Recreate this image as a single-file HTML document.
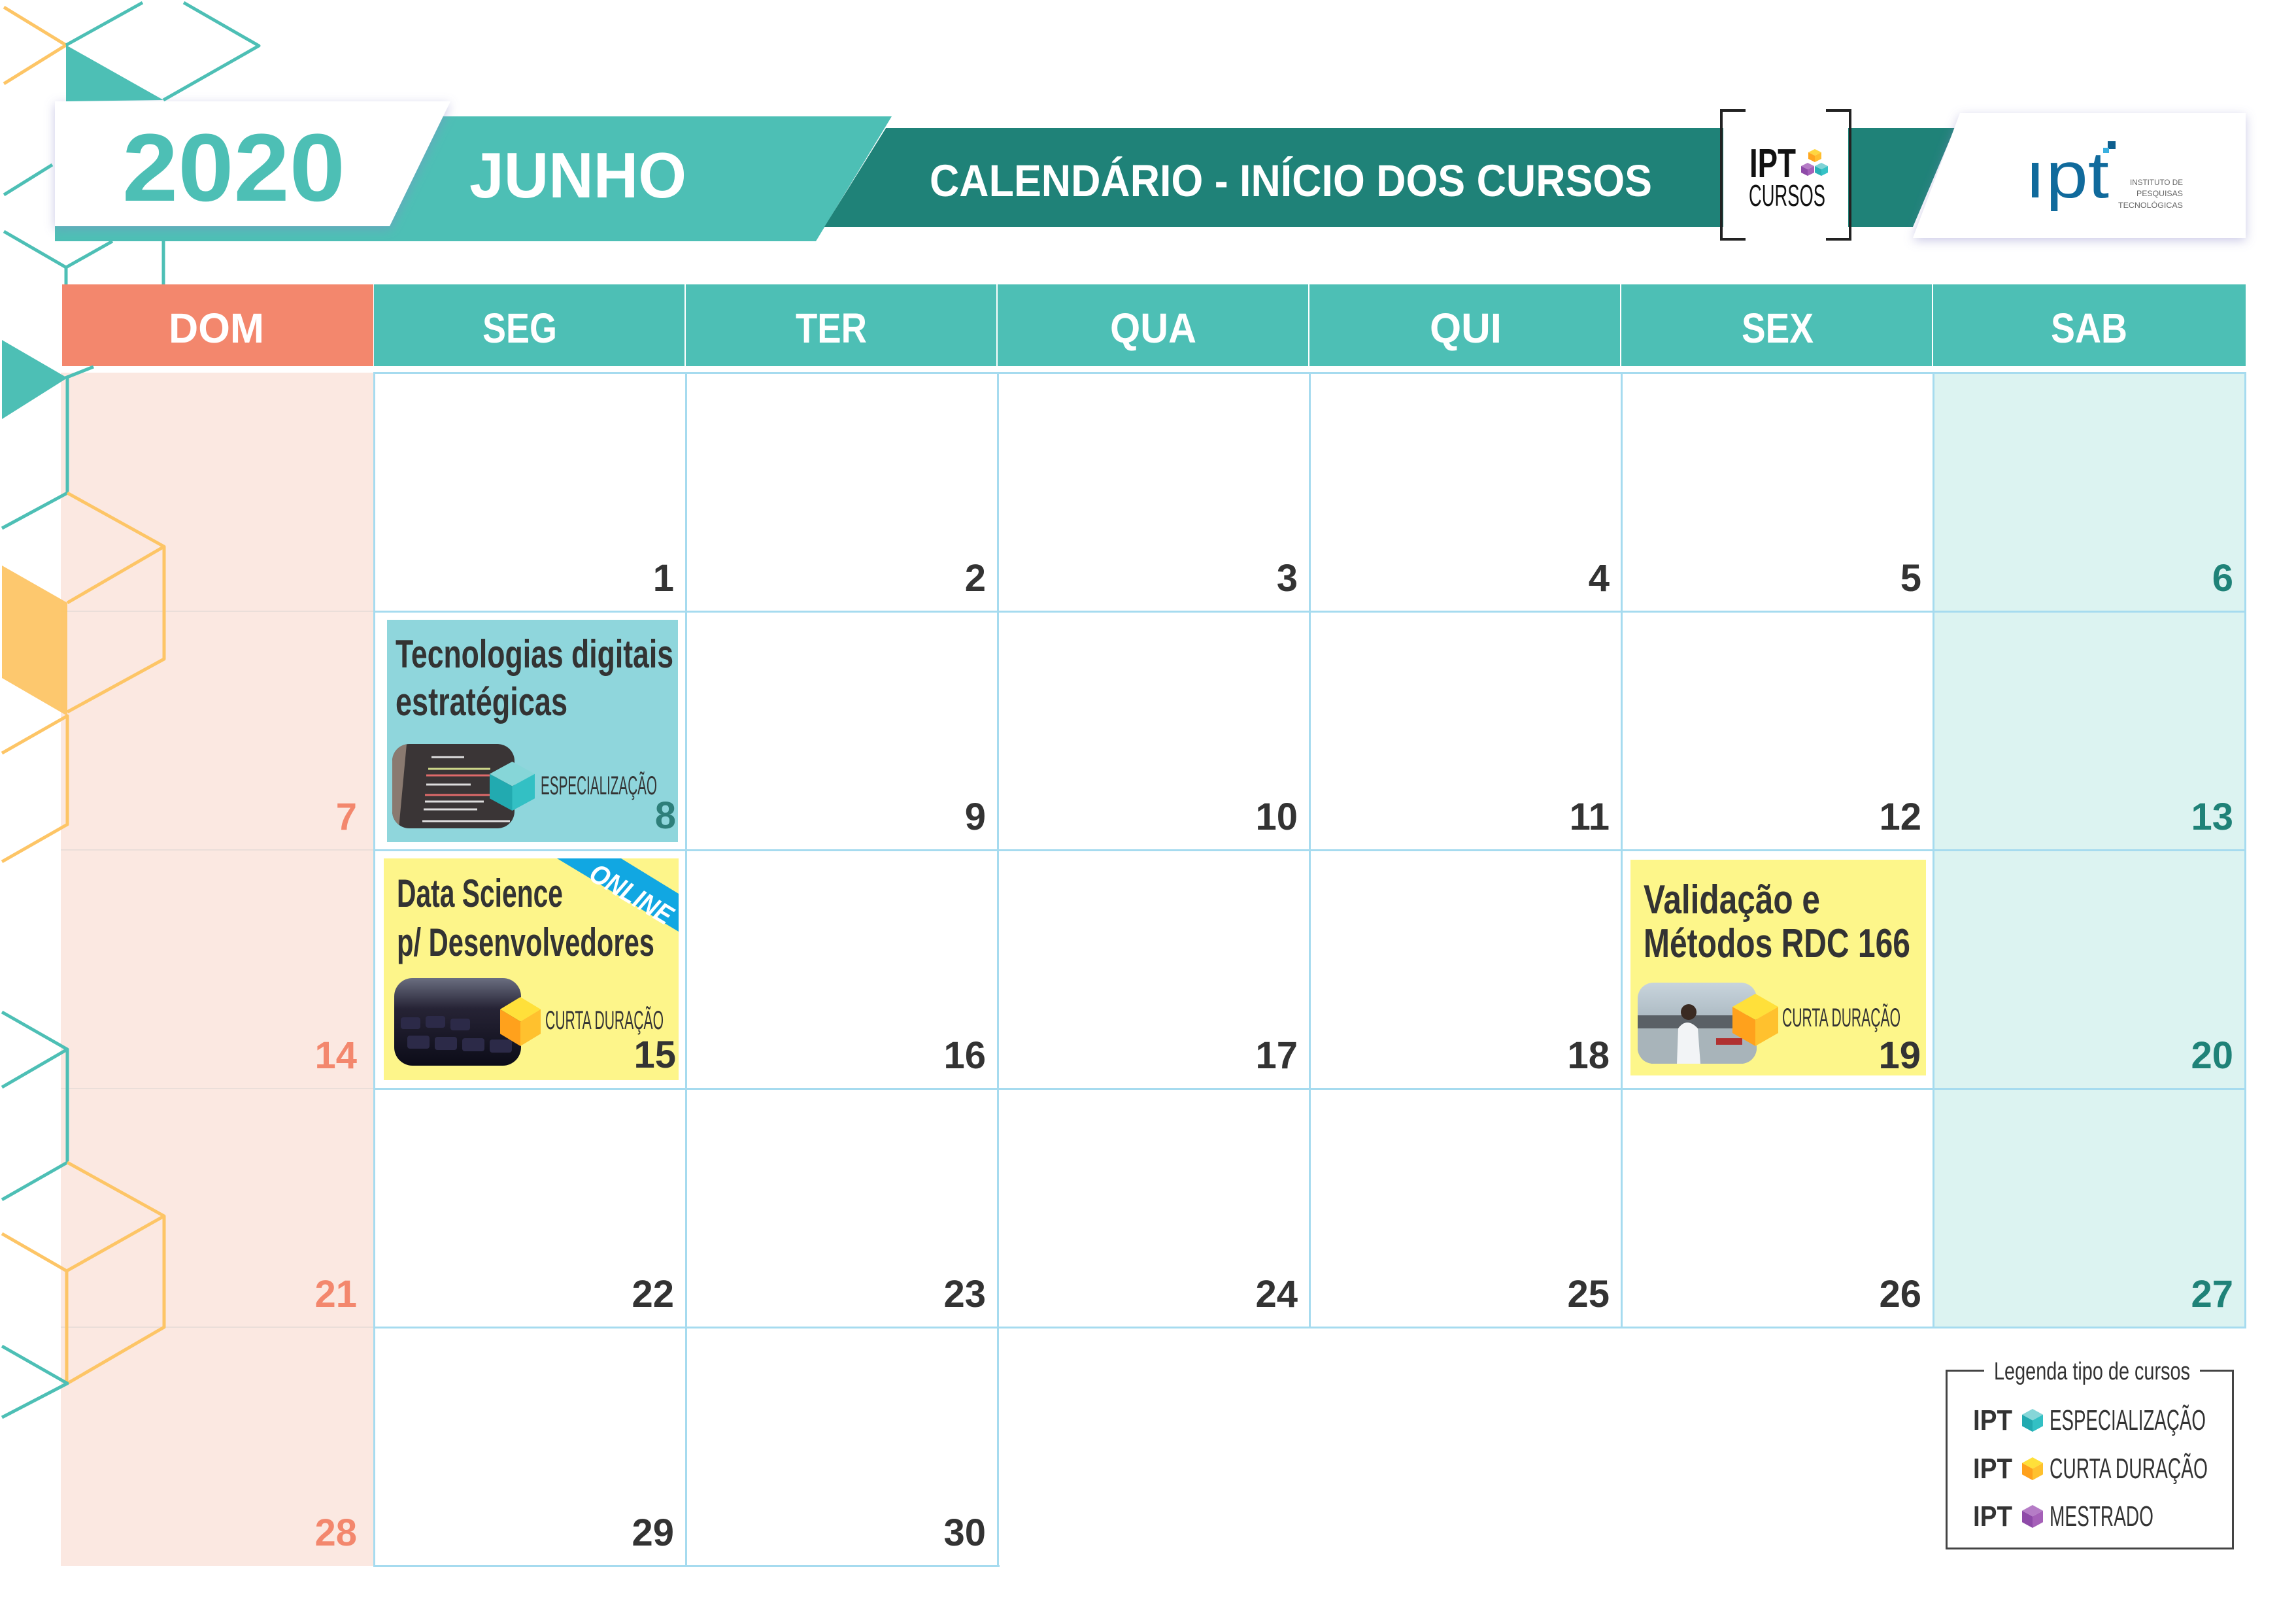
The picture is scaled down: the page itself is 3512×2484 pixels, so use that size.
<!DOCTYPE html>
<html><head><meta charset="utf-8">
<style>
*{margin:0;padding:0;box-sizing:border-box}
body{width:3512px;height:2484px;background:#fff;position:relative;overflow:hidden;font-family:"Liberation Sans",sans-serif}
.a{position:absolute}
.t{position:absolute;white-space:nowrap;line-height:1}
.t>span{display:inline-block;transform-origin:0 0}
.b{font-weight:bold}
.n{position:absolute;width:150px;text-align:right;font-weight:bold;font-size:58px;line-height:1;color:#333}
.sun{color:#f3876d}.sat{color:#1f8278}
.hl{position:absolute;height:3px;background:#a6dbef}
.vl{position:absolute;width:3px;background:#a6dbef}
.dh{position:absolute;top:435px;height:125px;background:#4dbfb5}
</style></head><body>

<svg class="a" style="left:0;top:0" width="3512" height="420">
<defs><filter id="sh" x="-10%" y="-20%" width="120%" height="140%"><feDropShadow dx="0" dy="4" stdDeviation="8" flood-color="#8a88c8" flood-opacity="0.45"/></filter></defs>
<polygon points="84,178 1364,178 1248,369 84,369" fill="#4dbfb5"/>
<polygon points="1355,196 2990,196 2926,347 1261,347" fill="#1f8278"/>
<rect x="2636" y="185" width="191" height="175" fill="#fff"/>
<polygon points="84,155 689,155 596,346 84,346" fill="#fff" filter="url(#sh)"/>
<polygon points="2998,173 3435,173 3435,364 2926,364" fill="#fff" filter="url(#sh)"/>
<path d="M2670,169 H2633 V366 H2670 M2793,169 H2830 V366 H2793" stroke="#222" stroke-width="4" fill="none"/>
<g transform="translate(2766,228) scale(0.2)"><polygon points="0,25 50,0 100,25 50,50" fill="#ffd640"/><polygon points="0,25 50,50 50,100 0,75" fill="#ffa51f"/><polygon points="50,50 100,25 100,75 50,100" fill="#ffbe2e"/></g>
<g transform="translate(2755,249) scale(0.2)"><polygon points="0,25 50,0 100,25 50,50" fill="#b57cc6"/><polygon points="0,25 50,50 50,100 0,75" fill="#8e4aa8"/><polygon points="50,50 100,25 100,75 50,100" fill="#a560b8"/></g>
<g transform="translate(2776,249) scale(0.2)"><polygon points="0,25 50,0 100,25 50,50" fill="#7fd3d6"/><polygon points="0,25 50,50 50,100 0,75" fill="#2ab0b6"/><polygon points="50,50 100,25 100,75 50,100" fill="#35c2c6"/></g>
<rect x="3224" y="216" width="12" height="12" fill="#0e5f8e"/>
<rect x="3217" y="226" width="9" height="8" fill="#3ab0e0"/>
</svg>

<div class="t b" style="left:187px;top:184px;font-size:147px;color:#4dbfb5;width:341px">2020</div>
<div class="t b" style="left:718px;top:219px;font-size:98px;color:#fff;width:332px">JUNHO</div>
<div class="t b" style="left:1422px;top:242px;font-size:69px;color:#fff;width:1105px">CALENDÁRIO - INÍCIO DOS CURSOS</div>
<div class="t b" style="left:2676px;top:220px;font-size:62px;color:#111;width:71px">IPT</div>
<div class="t" style="left:2675px;top:276px;font-size:46px;color:#111;width:117px">CURSOS</div>
<div class="t" style="left:3097px;top:218px;font-size:100px;color:#106a9c;width:129px">ıpt</div>
<div class="t" style="left:3258px;top:273px;font-size:12px;color:#666;width:81px">INSTITUTO DE</div>
<div class="t" style="left:3268px;top:290px;font-size:12px;color:#666;width:71px">PESQUISAS</div>
<div class="t" style="left:3240px;top:308px;font-size:12px;color:#666;width:99px">TECNOLÓGICAS</div>

<div class="dh" style="left:95px;width:476px;background:#f3876d"></div>
<div class="dh" style="left:572px;width:475px"></div>
<div class="dh" style="left:1049px;width:475px"></div>
<div class="dh" style="left:1526px;width:475px"></div>
<div class="dh" style="left:2003px;width:475px"></div>
<div class="dh" style="left:2480px;width:475px"></div>
<div class="dh" style="left:2957px;width:478px"></div>
<div class="t b" style="left:258px;top:470px;font-size:64px;color:#fff;width:146px">DOM</div>
<div class="t b" style="left:738px;top:470px;font-size:64px;color:#fff;width:114px">SEG</div>
<div class="t b" style="left:1217px;top:470px;font-size:64px;color:#fff;width:109px">TER</div>
<div class="t b" style="left:1698px;top:470px;font-size:64px;color:#fff;width:132px">QUA</div>
<div class="t b" style="left:2187px;top:470px;font-size:64px;color:#fff;width:110px">QUI</div>
<div class="t b" style="left:2664px;top:470px;font-size:64px;color:#fff;width:110px">SEX</div>
<div class="t b" style="left:3137px;top:470px;font-size:64px;color:#fff;width:117px">SAB</div>

<div class="a" style="left:93px;top:570px;width:479px;height:1825px;background:#fbe8e1"></div>
<div class="a" style="left:2957px;top:570px;width:478px;height:1460px;background:#dcf3f1"></div>
<div class="a" style="left:93px;top:934px;width:479px;height:2px;background:#eaded9"></div>
<div class="a" style="left:93px;top:1299px;width:479px;height:2px;background:#eaded9"></div>
<div class="a" style="left:93px;top:1664px;width:479px;height:2px;background:#eaded9"></div>
<div class="a" style="left:93px;top:2029px;width:479px;height:2px;background:#eaded9"></div>

<div class="hl" style="left:572px;top:569px;width:2864px"></div>
<div class="hl" style="left:572px;top:934px;width:2864px"></div>
<div class="hl" style="left:572px;top:1299px;width:2864px"></div>
<div class="hl" style="left:572px;top:1664px;width:2864px"></div>
<div class="hl" style="left:572px;top:2029px;width:2864px"></div>
<div class="hl" style="left:572px;top:2394px;width:957px"></div>
<div class="vl" style="left:571px;top:569px;height:1828px"></div>
<div class="vl" style="left:1048px;top:569px;height:1828px"></div>
<div class="vl" style="left:1525px;top:569px;height:1828px"></div>
<div class="vl" style="left:2002px;top:569px;height:1463px"></div>
<div class="vl" style="left:2479px;top:569px;height:1463px"></div>
<div class="vl" style="left:2956px;top:569px;height:1463px"></div>
<div class="vl" style="left:3433px;top:569px;height:1463px"></div>

<div class="a" style="left:592px;top:948px;width:445px;height:340px;background:#8fd6dc"></div>
<div class="t b" style="left:605px;top:971px;font-size:60px;color:#333;width:425px">Tecnologias digitais</div>
<div class="t b" style="left:605px;top:1044px;font-size:60px;color:#333;width:263px">estratégicas</div>
<svg class="a" style="left:600px;top:1138px" width="187" height="129">
<defs><clipPath id="c1"><rect width="187" height="129" rx="26"/></clipPath></defs>
<g clip-path="url(#c1)"><rect width="187" height="129" fill="#3a3536"/><polygon points="0,0 22,0 10,129 0,129" fill="#8a7a70"/>
<g stroke-width="3"><line x1="60" y1="20" x2="110" y2="20" stroke="#ddd"/><line x1="55" y1="38" x2="150" y2="38" stroke="#cfd88a"/><line x1="52" y1="48" x2="170" y2="48" stroke="#e06a6a"/><line x1="52" y1="62" x2="120" y2="62" stroke="#ddd"/><line x1="50" y1="78" x2="175" y2="78" stroke="#e06a6a"/><line x1="50" y1="88" x2="140" y2="88" stroke="#ddd"/><line x1="48" y1="100" x2="130" y2="100" stroke="#ddd"/><line x1="46" y1="118" x2="180" y2="118" stroke="#ddd"/></g></g></svg>
<svg class="a" style="left:749px;top:1165px" width="69" height="75" viewBox="0 0 100 100" preserveAspectRatio="none"><polygon points="0,25 50,0 100,25 50,50" fill="#86d6d8"/><polygon points="0,25 50,50 50,100 0,75" fill="#22aab0"/><polygon points="50,50 100,25 100,75 50,100" fill="#33c0c4"/></svg>
<div class="t" style="left:827px;top:1182px;font-size:40px;color:#333;width:178px">ESPECIALIZAÇÃO</div>
<div class="n" style="left:884px;top:1219px;color:#2e7f7a">8</div>

<div class="a" style="left:587px;top:1313px;width:451px;height:339px;background:#fdf58a"></div>
<svg class="a" style="left:852px;top:1313px" width="186" height="112"><polygon points="0,0 98,0 186,54 186,112" fill="#11a7e2"/>
<text x="114" y="54" transform="rotate(31 114 54)" text-anchor="middle" font-family="Liberation Sans" font-weight="bold" font-style="italic" font-size="42" fill="#fff" textLength="140" lengthAdjust="spacingAndGlyphs" dy="15">ONLINE</text></svg>
<div class="t b" style="left:607px;top:1337px;font-size:60px;color:#333;width:254px">Data Science</div>
<div class="t b" style="left:607px;top:1412px;font-size:60px;color:#333;width:394px">p/ Desenvolvedores</div>
<svg class="a" style="left:603px;top:1496px" width="194" height="134">
<defs><clipPath id="c2"><rect width="194" height="134" rx="28"/></clipPath><linearGradient id="g2" x1="0" y1="0" x2="0" y2="1"><stop offset="0" stop-color="#6a6e80"/><stop offset="0.35" stop-color="#262335"/><stop offset="1" stop-color="#0c0c18"/></linearGradient></defs>
<g clip-path="url(#c2)"><rect width="194" height="134" fill="url(#g2)"/>
<g fill="#2c2a48"><rect x="10" y="60" width="30" height="18" rx="4"/><rect x="48" y="58" width="30" height="18" rx="4"/><rect x="86" y="62" width="30" height="18" rx="4"/><rect x="20" y="88" width="34" height="20" rx="4"/><rect x="62" y="90" width="34" height="20" rx="4"/><rect x="104" y="92" width="34" height="20" rx="4"/><rect x="146" y="94" width="34" height="20" rx="4"/></g></g></svg>
<svg class="a" style="left:765px;top:1525px" width="62" height="75" viewBox="0 0 100 100" preserveAspectRatio="none"><polygon points="0,25 50,0 100,25 50,50" fill="#ffe03a"/><polygon points="0,25 50,50 50,100 0,75" fill="#ffa11c"/><polygon points="50,50 100,25 100,75 50,100" fill="#ffc12e"/></svg>
<div class="t" style="left:834px;top:1541px;font-size:40px;color:#333;width:181px">CURTA DURAÇÃO</div>
<div class="n" style="left:884px;top:1585px">15</div>

<div class="a" style="left:2494px;top:1315px;width:452px;height:330px;background:#fdf68a"></div>
<div class="t b" style="left:2514px;top:1346px;font-size:62px;color:#333;width:270px">Validação e</div>
<div class="t b" style="left:2514px;top:1413px;font-size:62px;color:#333;width:408px">Métodos RDC 166</div>
<svg class="a" style="left:2505px;top:1503px" width="182" height="124">
<defs><clipPath id="c3"><rect width="182" height="124" rx="24"/></clipPath><linearGradient id="g3" x1="0" y1="0" x2="0" y2="1"><stop offset="0" stop-color="#c8d4dc"/><stop offset="1" stop-color="#8a9aa4"/></linearGradient></defs>
<g clip-path="url(#c3)"><rect width="182" height="124" fill="url(#g3)"/><rect x="0" y="50" width="182" height="20" fill="#5a6066"/><rect x="0" y="70" width="182" height="54" fill="#a8b4ba"/>
<path d="M60,124 L62,70 Q75,52 92,70 L96,124 Z" fill="#f2f4f6"/><circle cx="78" cy="45" r="12" fill="#3a2a22"/><rect x="120" y="85" width="40" height="10" fill="#b03030"/></g></svg>
<svg class="a" style="left:2650px;top:1520px" width="70" height="80" viewBox="0 0 100 100" preserveAspectRatio="none"><polygon points="0,25 50,0 100,25 50,50" fill="#ffe03a"/><polygon points="0,25 50,50 50,100 0,75" fill="#ffa11c"/><polygon points="50,50 100,25 100,75 50,100" fill="#ffc12e"/></svg>
<div class="t" style="left:2726px;top:1537px;font-size:40px;color:#333;width:181px">CURTA DURAÇÃO</div>
<div class="n" style="left:2788px;top:1586px">19</div>

<div class="n" style="left:881px;top:856px">1</div>
<div class="n" style="left:1358px;top:856px">2</div>
<div class="n" style="left:1835px;top:856px">3</div>
<div class="n" style="left:2312px;top:856px">4</div>
<div class="n" style="left:2789px;top:856px">5</div>
<div class="n sat" style="left:3266px;top:856px">6</div>
<div class="n sun" style="left:396px;top:1221px">7</div>
<div class="n" style="left:1358px;top:1221px">9</div>
<div class="n" style="left:1835px;top:1221px">10</div>
<div class="n" style="left:2312px;top:1221px">11</div>
<div class="n" style="left:2789px;top:1221px">12</div>
<div class="n sat" style="left:3266px;top:1221px">13</div>
<div class="n sun" style="left:396px;top:1586px">14</div>
<div class="n" style="left:1358px;top:1586px">16</div>
<div class="n" style="left:1835px;top:1586px">17</div>
<div class="n" style="left:2312px;top:1586px">18</div>
<div class="n sat" style="left:3266px;top:1586px">20</div>
<div class="n sun" style="left:396px;top:1951px">21</div>
<div class="n" style="left:881px;top:1951px">22</div>
<div class="n" style="left:1358px;top:1951px">23</div>
<div class="n" style="left:1835px;top:1951px">24</div>
<div class="n" style="left:2312px;top:1951px">25</div>
<div class="n" style="left:2789px;top:1951px">26</div>
<div class="n sat" style="left:3266px;top:1951px">27</div>
<div class="n sun" style="left:396px;top:2316px">28</div>
<div class="n" style="left:881px;top:2316px">29</div>
<div class="n" style="left:1358px;top:2316px">30</div>

<div class="a" style="left:2976px;top:2095px;width:441px;height:275px;border:3px solid #444"></div>
<div class="a" style="left:3035px;top:2080px;width:330px;height:30px;background:#fff"></div>
<div class="t" style="left:3050px;top:2079px;font-size:38px;color:#333;width:300px">Legenda tipo de cursos</div>
<div class="t b" style="left:3018px;top:2151px;font-size:44px;color:#333;width:60px">IPT</div>
<div class="t b" style="left:3018px;top:2225px;font-size:44px;color:#333;width:60px">IPT</div>
<div class="t b" style="left:3018px;top:2298px;font-size:44px;color:#333;width:60px">IPT</div>
<svg class="a" style="left:3093px;top:2155px" width="32" height="35" viewBox="0 0 100 100" preserveAspectRatio="none"><polygon points="0,25 50,0 100,25 50,50" fill="#86d6d8"/><polygon points="0,25 50,50 50,100 0,75" fill="#22aab0"/><polygon points="50,50 100,25 100,75 50,100" fill="#33c0c4"/></svg>
<svg class="a" style="left:3093px;top:2229px" width="32" height="35" viewBox="0 0 100 100" preserveAspectRatio="none"><polygon points="0,25 50,0 100,25 50,50" fill="#ffe03a"/><polygon points="0,25 50,50 50,100 0,75" fill="#ffa11c"/><polygon points="50,50 100,25 100,75 50,100" fill="#ffc12e"/></svg>
<svg class="a" style="left:3093px;top:2302px" width="32" height="35" viewBox="0 0 100 100" preserveAspectRatio="none"><polygon points="0,25 50,0 100,25 50,50" fill="#b57cc6"/><polygon points="0,25 50,50 50,100 0,75" fill="#8e4aa8"/><polygon points="50,50 100,25 100,75 50,100" fill="#a560b8"/></svg>
<div class="t" style="left:3135px;top:2151px;font-size:44px;color:#333;width:239px">ESPECIALIZAÇÃO</div>
<div class="t" style="left:3135px;top:2225px;font-size:44px;color:#333;width:242px">CURTA DURAÇÃO</div>
<div class="t" style="left:3135px;top:2298px;font-size:44px;color:#333;width:159px">MESTRADO</div>

<svg class="a" style="left:0;top:0" width="420" height="2484">
<g fill="none" stroke-width="5" stroke-linejoin="round">
<polyline points="6,11 101,69 6,128" stroke="#fdc566"/>
<polyline points="101,69 218,4" stroke="#4dbfb5"/>
<polyline points="281,4 396,70 250,153" stroke="#4dbfb5"/>
<polyline points="6,354 101,409 172,369" stroke="#4dbfb5"/>
<polyline points="101,409 101,435" stroke="#4dbfb5"/>
<polyline points="250,369 250,435" stroke="#4dbfb5"/>
<polyline points="6,298 80,252" stroke="#4dbfb5"/>
<polyline points="100,578 143,561" stroke="#4dbfb5"/>
<polyline points="103,578 103,754 3,808" stroke="#4dbfb5"/>
<polyline points="103,754 251,836 251,1008 103,1089" stroke="#fdc566"/>
<polyline points="103,922 251,836" stroke="#fdc566"/>
<polyline points="3,1152 103,1095 103,1261 3,1318" stroke="#fdc566"/>
<polyline points="3,1548 103,1605 3,1663" stroke="#4dbfb5"/>
<polyline points="103,1605 103,1778 3,1835" stroke="#4dbfb5"/>
<polyline points="103,1778 251,1860 251,2030 103,2116" stroke="#fdc566"/>
<polyline points="3,1887 102,1944 251,1860" stroke="#fdc566"/>
<polyline points="102,1944 102,2116" stroke="#fdc566"/>
<polyline points="3,2059 103,2116 3,2168" stroke="#4dbfb5"/>
</g>
<polygon points="101,69 101,155 250,153" fill="#4dbfb5"/>
<polygon points="3,520 103,578 3,641" fill="#4dbfb5"/>
<polygon points="3,865 103,922 103,1095 3,1037" fill="#fdc566" opacity="0.95"/>
</svg>

<script>
document.querySelectorAll('.t').forEach(function(el){
  var w=parseFloat(el.style.width);
  var s=document.createElement('span');
  while(el.firstChild)s.appendChild(el.firstChild);
  el.appendChild(s);
  el.style.width='auto';
  var sw=s.getBoundingClientRect().width;
  if(w&&sw)s.style.transform='scaleX('+(w/sw)+')';
});
</script>
</body></html>
